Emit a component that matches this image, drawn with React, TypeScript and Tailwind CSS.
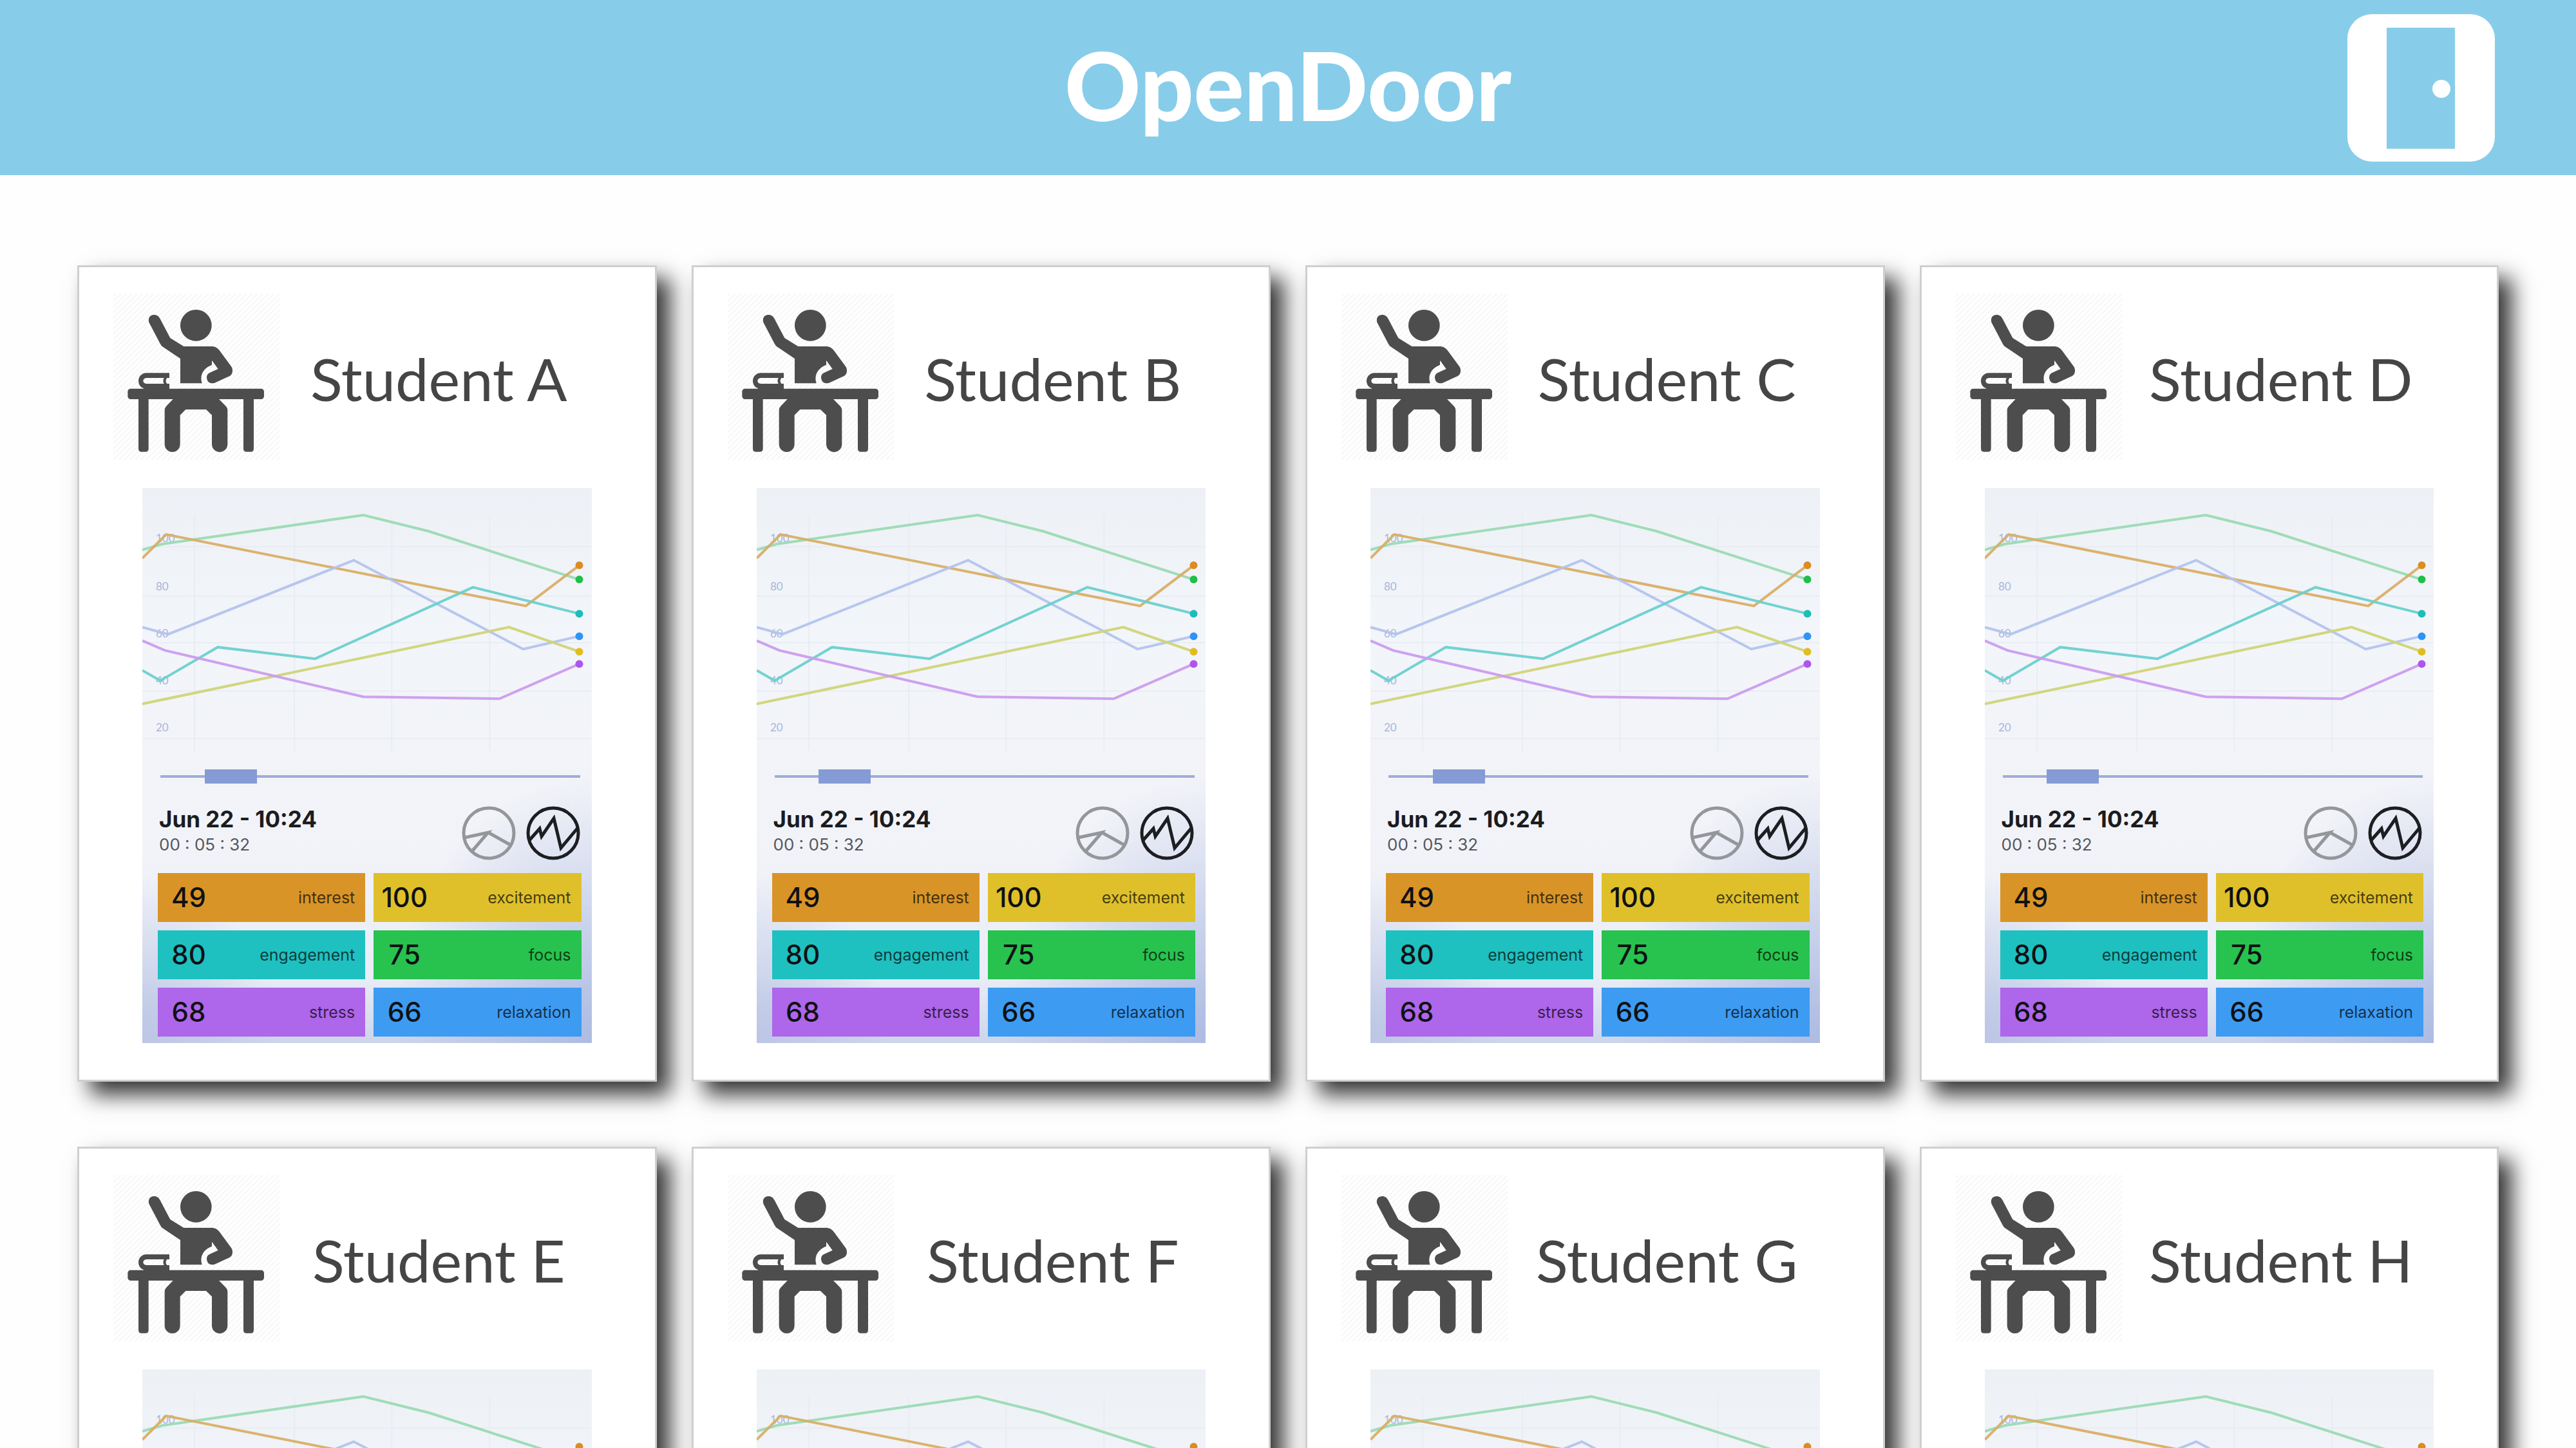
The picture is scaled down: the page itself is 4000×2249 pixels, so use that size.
const students = ["A", "B", "C", "D", "E", "F", "G", "H"];

const metrics = [
  { value: 49, label: "interest", tone: "bg-[#d99427]" },
  { value: 100, label: "excitement", tone: "bg-[#dfc02a]" },
  { value: 80, label: "engagement", tone: "bg-[#1fc0c0]" },
  { value: 75, label: "focus", tone: "bg-[#28c24f]" },
  { value: 68, label: "stress", tone: "bg-[#ae66ea]" },
  { value: 66, label: "relaxation", tone: "bg-[#3d9bf2]" },
];

const series = [
  { points: "0,96 31,87 343,42 444,67 678,142", stroke: "#9adab4", dot: "#1fbf48" },
  { points: "0,109 37,72 595,183 678,120", stroke: "#d9ae66", dot: "#dc8c20" },
  { points: "0,216 40,227 328,112 591,250 678,230", stroke: "#b3c3ee", dot: "#2f93f5" },
  { points: "0,283 28,299 117,247 268,265 513,154 678,195", stroke: "#6ad0cd", dot: "#1dbdb8" },
  { points: "0,335 569,216 678,254", stroke: "#d0d476", dot: "#e2bd22" },
  { points: "0,237 35,252 343,324 554,327 678,273", stroke: "#cb9cee", dot: "#ae55ec" },
];

const axis = [
  { label: "100", y: 84 },
  { label: "80", y: 159 },
  { label: "60", y: 232 },
  { label: "40", y: 305 },
  { label: "20", y: 378 },
];

function DoorLogo() {
  return (
    <svg viewBox="0 0 229 229" className="size-[229px]" role="img" aria-label="Open door">
      <rect width="229" height="229" rx="38" fill="#fff" />
      <rect x="61" y="21" width="106" height="188" fill="#87cdea" />
      <circle cx="146" cy="116" r="14" fill="#fff" />
    </svg>
  );
}

function StudentIcon({ id }: { id: string }) {
  const hatch = `hatch-${id}`;
  return (
    <svg viewBox="48 48 780 780" className="size-[260px] shrink-0" aria-hidden="true">
      <defs>
        <pattern id={hatch} width="18" height="18" patternUnits="userSpaceOnUse" patternTransform="rotate(45)">
          <rect width="7" height="18" fill="#f7f7f7" />
        </pattern>
      </defs>
      <rect x="48" y="48" width="775" height="775" fill={`url(#${hatch})`} />
      <g fill="#4d4d4d">
        <circle cx="433" cy="196" r="73" />
        <path d="M214 182 C208 158 222 147 238 147 C252 147 260 154 266 166 L313 255 L376 294 H505 C522 294 535 302 544 315 L597 387 C607 402 605 424 590 432 L520 464 C506 469 491 464 486 452 C480 438 483 424 495 418 L536 399 L507 359 V380 C470 395 448 425 461 466 H360 V351 L280 297 C273 292 270 288 266 281 Z" />
        <path fillRule="evenodd" d="M202 418 H309 V441 H298 C291 449 291 460 298 468 H309 V495 H192 C190 489 186 487 180 485 C160 472 160 437 180 425 C187 420 193 418 202 418 Z M202 441 C182 443 182 466 202 468 H284 C279 460 279 449 284 441 Z" />
        <rect x="115" y="491" width="635" height="49" rx="14" />
        <path d="M165 530 H212 V770 Q212 785 198 785 H179 Q165 785 165 770 Z" />
        <path d="M654 530 H702 V770 Q702 785 688 785 H668 Q654 785 654 770 Z" />
        <path d="M331 535 H535 L572 572 Q580 580 580 592 V750 A36 36 0 0 1 507 750 V614 L480 588 H385 L359 614 V750 A36 36 0 0 1 287 750 V592 Q287 580 295 572 Z" />
      </g>
    </svg>
  );
}

function Chart() {
  return (
    <svg viewBox="0 0 697 420" className="block w-full" role="img" aria-label="Performance metrics over time">
      <g stroke="#e9edf2" strokeWidth="2">
        {[81, 236, 387, 539].map((x) => (
          <line key={x} x1={x} x2={x} y1="42" y2="408" />
        ))}
        {[91, 168, 240, 315, 389].map((y) => (
          <line key={y} x1="0" x2="697" y1={y} y2={y} />
        ))}
      </g>
      <g fill="#a9b6dc" fontSize="17" fontFamily="Lato, sans-serif">
        {axis.map((tick) => (
          <text key={tick.label} x="21" y={tick.y}>
            {tick.label}
          </text>
        ))}
      </g>
      {series.map((line) => (
        <polyline key={line.dot} points={line.points} fill="none" stroke={line.stroke} strokeWidth="4" strokeOpacity="0.95" />
      ))}
      {series.map((line) => {
        const [x, y] = line.points.split(" ").pop()!.split(",");
        return <circle key={line.dot} cx={x} cy={y} r="6" fill={line.dot} />;
      })}
    </svg>
  );
}

function Dashboard({ name }: { name: string }) {
  return (
    <section
      aria-label={`${name} metrics`}
      className="mx-[98px] mb-[57px] bg-[radial-gradient(ellipse_30%_30%_at_0%_100%,#bcc6e5_0%,transparent_100%),radial-gradient(ellipse_45%_48%_at_100%_100%,#aebce2_0%,transparent_100%),linear-gradient(to_bottom,#edf1f6_0%,#f2f5f9_25%,#f2f3f8_65%,#e9edf6_88%,#ccd5ea_100%)] pb-2.5"
    >
      <Chart />
      <input
        type="range"
        min="0"
        max="100"
        defaultValue="12"
        aria-label={`${name} timeline`}
        className="mx-7 mt-4 block h-6 w-[652px] appearance-none bg-[linear-gradient(#9dacd9,#9dacd9)] bg-[length:100%_4px] bg-center bg-no-repeat [&::-webkit-slider-thumb]:h-[22px] [&::-webkit-slider-thumb]:w-[81px] [&::-webkit-slider-thumb]:appearance-none [&::-webkit-slider-thumb]:bg-[#859bd5]"
      />
      <div className="mt-[34px] flex items-center justify-between pr-[18px] pl-[26px]">
        <div className="pb-1 font-[Inter,sans-serif]">
          <p className="text-[35px] leading-10 font-bold text-[#1b1c20]">Jun 22 - 10:24</p>
          <p className="text-[26px] leading-10 text-[#55575c]">00 : 05 : 32</p>
        </div>
        <div className="flex gap-4">
          <button type="button" aria-label="Pie view">
            <svg viewBox="0 0 84 84" className="size-[84px]" fill="none" stroke="#94969b" strokeWidth="5">
              <circle cx="42" cy="42" r="39" />
              <path d="M4 49 L41 41 L16 70 M41 41 L75 60" />
            </svg>
          </button>
          <button type="button" aria-label="Line view">
            <svg viewBox="0 0 84 84" className="size-[84px]" fill="none" stroke="#1d1e22" strokeWidth="5">
              <circle cx="42" cy="42" r="39" />
              <path d="M5 53 L21 35 L24 47 L43 19 L54 65 L80 34" />
            </svg>
          </button>
        </div>
      </div>
      <dl className="mt-5 grid grid-cols-2 gap-[13px] pr-4 pl-6 font-[Inter,sans-serif]">
        {metrics.map((metric) => (
          <div key={metric.label} className={`flex h-[76px] flex-row-reverse items-center justify-between pr-4 ${metric.tone}`}>
            <dt className="text-[25px] leading-8 text-black/70">{metric.label}</dt>
            <dd className="w-24 text-center text-[42px] leading-[76px] font-medium text-[#101114]">{metric.value}</dd>
          </div>
        ))}
      </dl>
    </section>
  );
}

function StudentCard({ letter }: { letter: string }) {
  const name = `Student ${letter}`;
  return (
    <article className="border-3 border-[#cfcfcf] bg-white shadow-[20px_20px_32px_rgba(0,0,0,0.8)]">
      <header className="flex items-center pt-[41px] pr-[90px] pb-[42px] pl-[53px]">
        <StudentIcon id={letter} />
        <h2 className="flex-1 pt-1 text-center text-[92px] leading-[104px] text-[#454545]">{name}</h2>
      </header>
      <Dashboard name={name} />
    </article>
  );
}

export default function App() {
  return (
    <div className="h-screen overflow-x-hidden overflow-y-auto bg-[#fefefe] font-[Lato,sans-serif] [scrollbar-width:none]">
      <header className="grid h-[272px] grid-cols-3 items-center bg-[#87cdea] px-[126px]">
        <h1 className="col-start-2 pb-2 text-center text-[146px] leading-none font-black text-white">OpenDoor</h1>
        <div className="justify-self-end">
          <DoorLogo />
        </div>
      </header>
      <main className="grid grid-cols-4 gap-x-[54px] gap-y-[101px] px-[120px] pt-[140px] pb-[140px]">
        {students.map((letter) => (
          <StudentCard key={letter} letter={letter} />
        ))}
      </main>
    </div>
  );
}
